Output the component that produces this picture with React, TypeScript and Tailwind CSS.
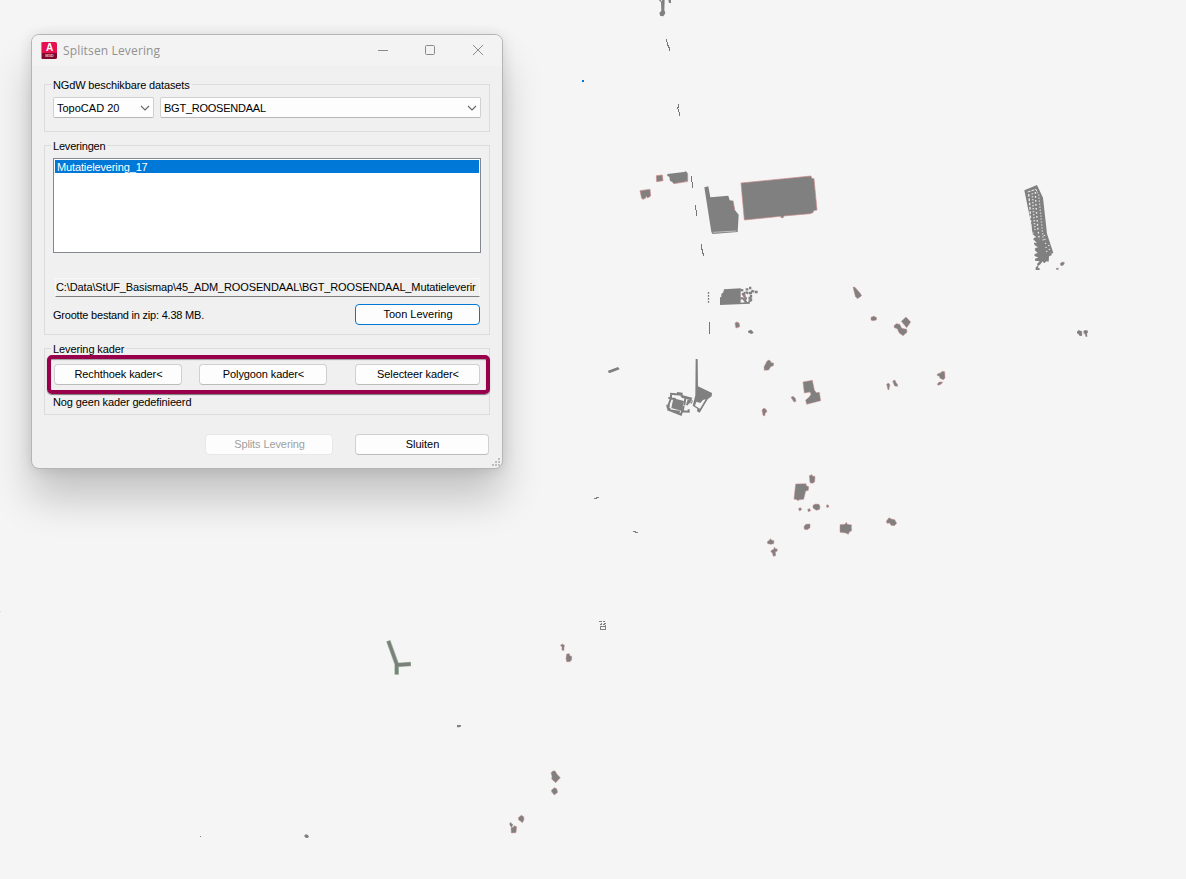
import type { ReactNode } from "react";
import { cva } from "class-variance-authority";
import { clsx } from "clsx";

const DELIVERIES = [{ id: 17, name: "Mutatielevering_17" }];

const button = cva(
  "flex h-[21px] shrink-0 items-center justify-center whitespace-nowrap rounded-[4px] border bg-[#fdfdfd] pb-px pl-px",
  {
    variants: {
      tone: {
        normal: "border-[#d0d0d0] border-b-[#bcbcbc] text-black",
        primary: "border-[#0078d4] text-black",
        disabled: "border-[#e7e7e7] bg-[#f7f7f7] text-[#a0a0a0]",
      },
    },
    defaultVariants: { tone: "normal" },
  }
);

interface GroupProps {
  title: string;
  className?: string;
  titleClassName?: string;
  children: ReactNode;
}

function Group({ title, className, titleClassName, children }: GroupProps) {
  return (
    <section className={clsx("flex w-[446px] shrink-0 flex-col border border-[#dcdcdc] px-2", className)}>
      <h2 className="-mt-[7px] -ml-0.5 flex h-[14px] w-fit shrink-0 items-center bg-[#f0f0f0] px-0.5 leading-[14px]">
        <span className={titleClassName}>{title}</span>
      </h2>
      {children}
    </section>
  );
}

function Select({ value, className, textClassName }: { value: string; className: string; textClassName?: string }) {
  return (
    <button
      className={clsx(
        "flex h-[21px] items-center justify-between rounded-[2px] border border-[#d0d0d0] border-b-[#b8b8b8] bg-[#fdfdfd] pl-[3px] pr-[3px]",
        className
      )}
    >
      <span className={textClassName}>{value}</span>
      <svg width="10" height="6" viewBox="0 0 10 6" fill="none" stroke="#666" strokeWidth="1.1">
        <path d="M1 1 5 5 9 1" />
      </svg>
    </button>
  );
}

function AppLogo() {
  return (
    <span className="relative -mt-px flex h-[17px] w-4 flex-col items-center overflow-hidden rounded-[2px] bg-[#e51050] font-[Liberation_Sans] font-bold text-white">
      <span className="absolute inset-y-0 left-0 w-px bg-[#ef6a92]" />
      <span className="z-10 flex h-[11px] items-center pl-px pt-px text-[10px] leading-[11px]">A</span>
      <span className="ml-px flex h-1.5 w-full items-center justify-center bg-[#80082f] text-[4px] leading-none text-[#e8c6d2]">
        M3D
      </span>
    </span>
  );
}

function TitleBar() {
  return (
    <header className="flex h-[31px] shrink-0 items-center bg-[#f3f3f3] pl-[9px] text-[#919191]">
      <AppLogo />
      <h1 className="ml-1.5 flex-1 font-['Open_Sans',sans-serif] text-[12px] leading-4 tracking-[0.15px]">
        Splitsen Levering
      </h1>
      <svg width="110" height="12" viewBox="0 0 110 12" fill="none" stroke="#8a8a8a" className="-mt-0.5 mr-[15px]">
        <path d="M1 6.5h10" />
        <rect x="48.5" y="1.5" width="9" height="9" rx="1" />
        <path d="m96 1 10 10M106 1 96 11" />
      </svg>
    </header>
  );
}

function Grip() {
  return (
    <svg width="8" height="8" viewBox="0 0 8 8" fill="#bdbdbd" className="absolute bottom-[2px] right-[2px]">
      <path d="M6 0h2v2H6zM3 3h2v2H3zM6 3h2v2H6zM0 6h2v2H0zM3 6h2v2H3zM6 6h2v2H6z" />
    </svg>
  );
}

function SplitDialog() {
  return (
    <div className="absolute left-[31px] top-[34px] flex h-[435px] w-[472px] flex-col rounded-[8px] border border-[#b5b5b5] bg-[#f0f0f0] shadow-[0_30px_40px_rgba(0,0,0,0.2),0_1px_14px_rgba(0,0,0,0.12)]">
      <div className="overflow-hidden rounded-t-[7px]">
        <TitleBar />
      </div>

      <div className="flex flex-1 flex-col pl-3 pt-[18px]">
        <Group title="NGdW beschikbare datasets" className="h-12" titleClassName="tracking-[-0.14px]">
          <div className="mt-[5px] flex gap-1.5">
            <Select value="TopoCAD 20" className="w-[101px]" />
            <Select value="BGT_ROOSENDAAL" className="w-[321px]" textClassName="tracking-[-0.24px]" />
          </div>
        </Group>

        <Group title="Leveringen" className="mt-[13px] h-[190px]" titleClassName="tracking-[-0.2px]">
          <ul className="mt-[5px] h-[95px] w-[428px] border border-[#828790] bg-white p-px">
            {DELIVERIES.map((item) => (
              <li key={item.id} className="h-[13px] bg-[#0078d7] pl-0.5 leading-[14px] tracking-[-0.13px] text-white">
                {item.name}
              </li>
            ))}
          </ul>
          <div className="ml-0.5 mt-[25px] flex h-[19px] w-[425px] items-center border border-[#f8f8f8] border-b-[#7d7d7d] pb-0.5">
            <span className="whitespace-nowrap tracking-[-0.13px]">
              C:\Data\StUF_Basismap\45_ADM_ROOSENDAAL\BGT_ROOSENDAAL_Mutatieleverir
            </span>
          </div>
          <div className="mt-[7px] flex w-[427px] items-center justify-between">
            <span className="tracking-[-0.21px]">Grootte bestand in zip: 4.38 MB.</span>
            <button className={clsx(button({ tone: "primary" }), "w-[125px]")}>Toon Levering</button>
          </div>
        </Group>

        <Group title="Levering kader" className="relative mt-[13px] h-[67px]" titleClassName="tracking-[-0.1px]">
          <div className="ml-px mt-2 flex tracking-[-0.1px]">
            <button className={clsx(button(), "w-32")}>Rechthoek kader&lt;</button>
            <button className={clsx(button(), "ml-[17px] w-32")}>Polygoon kader&lt;</button>
            <button className={clsx(button(), "ml-7 w-[125px]")}>Selecteer kader&lt;</button>
          </div>
          <p className="mt-[10px] leading-[14px] tracking-[-0.13px]">Nog geen kader gedefinieerd</p>
          {/* Highlight around the frame actions */}
          <div className="pointer-events-none absolute left-[2px] top-[6px] h-[39px] w-[443px] rounded-[5px] border-4 border-[#98004c] shadow-[0_1px_1px_rgba(0,0,0,0.5),inset_0_1px_1px_rgba(0,0,0,0.35)]" />
        </Group>

        <footer className="mt-[19px] flex pl-[161px]">
          <button disabled className={clsx(button({ tone: "disabled" }), "w-32 tracking-[-0.1px]")}>
            Splits Levering
          </button>
          <button className={clsx(button(), "ml-[22px] w-[134px]")}>Sluiten</button>
        </footer>
      </div>
      <Grip />
    </div>
  );
}

function MapCanvas() {
  return (
    <svg
      width="1186"
      height="879"
      viewBox="0 0 1186 879"
      className="block"
      fill="#808080"
      stroke="none"
    >
      {/* North-west blocks */}
      <g transform="translate(630 160) scale(.33333)">
        <g stroke="#cf8a8a" strokeWidth="2">
          <path d="M333 69 543 48 545 55 552 56 561 150 550 152 550 157 541 161 461 168 460 173 453 173 452 169 343 180Z" />
          <path d="M30 92 60 88 62 108 53 114 49 109 46 115 39 118 35 115Z" />
          <path d="M79 47 97 45 99 62 80 65Z" />
          <path d="M315 490 320 486 327 489 329 500 318 504Z" />
        </g>
        <path d="M112 42 162 36 168 34 173 40 173 64 131 71 126 65 120 63 118 50 112 48Z" />
        <path d="m131 71 42-6V42" fill="none" stroke="#cf8a8a" strokeWidth="2" />
        <path d="M223 82 235 79 241 112 295 107 299 121 309 122 314 149 326 164 323 216 248 222 244 216Z" />
        <path d="m309 122 5 27" stroke="#cf7777" strokeWidth="2" />
        <path d="m249 217 70-4" stroke="#ddd" strokeWidth="2" />
        <path
          d="M184.500 48v18h3v9h0v8M196.500 135v14h3v6v12h3M214.500 252v16h3v12h3v7M238.500 486v36"
          fill="none"
          stroke="#777"
          strokeWidth="3"
          shapeRendering="crispEdges"
        />
        <path d="M235.500 396v36" fill="none" stroke="#777" strokeWidth="4" strokeDasharray="5 4" />
        <path d="M270 435V412l4-1v-9l6-5 2-9 50-3v43l27-3 1 6Z" />
        <path d="m331 390 9 1m7-3h8m2-4h7m0 8 10 4h9M336 404l7-4v22m-12-7h22m-5-19 7 5m4 9v16m-15-6 5 8m8-29h6v27" fill="none" stroke="#808080" strokeWidth="7" strokeDasharray="9 2" />
        <path d="m344 406 4 5m-6 2 4 3" stroke="#ef7777" strokeWidth="3" />
        <path d="m354 513 9-4 4 4 4 5-6 4-10-4Z" />
      </g>

      {/* Road fragments at the top */}
      <g transform="translate(640 0) scale(.33333)">
        <path d="M57 0h5l2 5 2-5h8l-1 30 3 10-6 9-9-1-3-9 6-7-1-26-4-2ZM85 0h8v9h-6Z" />
        <path
          d="M79.500 118v8h3v10h3v6h3v10M115.500 312v11h-3v3h3v10h3v12"
          fill="none"
          stroke="#777"
          strokeWidth="3"
          shapeRendering="crispEdges"
        />
      </g>
      <path d="M582 80h2v2h-2z" fill="#0078d7" />

      {/* Parking strip */}
      <g transform="translate(1000 175) scale(.33333)">
        <path d="m73 46 38-16 18 38 12 108 19 58-6 2 1 5-8 3-1 16-6-1-8 6-4-6-8 10-4 2-2 8 5 1v5h-12v-8l6-5-2-5 8-8-14-2v-6l10-3-12-6 1-5 9-3-9-9 2-6 8-2-12-8v-6h9l-11-9 2-6 7-1-11-9-4-29Z" />
        <g fill="none" stroke="#ededed">
          <path d="m83 51 25-8 5 12" strokeWidth="3" strokeDasharray="9 3" />
          <path d="m86 57 4 40 3 70" strokeWidth="4" strokeDasharray="8 5" />
          <path d="m97 55 3 50 5 60" strokeWidth="5" strokeDasharray="3 6" />
          <path d="m106 51 2 40 5 64 5 40" strokeWidth="4" strokeDasharray="5 7" />
          <path d="m116 59 6 59 8 80" strokeWidth="4" strokeDasharray="3 6" />
          <path d="m99 173 4 26 1 41M133 180l8 55M146 210l4 24" strokeWidth="4" strokeDasharray="3 9" />
        </g>
        <path d="m180 266 7-6 7 4-4 7-7 2ZM168 280l7-2 1 5-6 2Z" />
        <path d="m190 260 4 4m-24 16 5 4M245 469v12M252 469v10" stroke="#df8888" strokeWidth="2" />
        <path d="m231 470 6-6 2 3 6 1 1 14-7 1-3-5-5-3ZM251 468l4-3 9 2-1 7-2 1 1 10h-5l-2-9-4-3Z" />
      </g>

      {/* Central buildings */}
      <g transform="translate(600 340) scale(.33333)">
        <path d="m24 92 12-4 18-7 5 7-27 10-6 1ZM287 57h6l1 82 42 20-1 10-12 9-24 40-8-4 1-8-14-9 8-31Z" />
        <path d="m289 185 12 4 8-9 8-2-17 28-15-9Z" fill="#f5f5f5" />
        <path d="m220 175 32 8-6 30-32-9Z" />
        <g fill="none" stroke="#808080" strokeWidth="6">
          <path d="m210 161 36 3m-33-2v12m-8-1 22 4m4-18 14 2v7l31 8M245 170l26 7-2 10-8 3M213 174l-10 29 8 6" />
          <path d="m199 196 10 4m-7 8 41 16 4-14M208 211l32 4M256 175l-3 21m13-17-5 17m-10 2-3 16 18 1v-7" />
        </g>
        <path d="m272 179 5 3-3 9" fill="none" stroke="#808080" strokeWidth="3" />
        <g stroke="#cf8a8a" strokeWidth="1.5">
          <path d="m500 65 5-5 7 3 1 5 8 1-1 8-8 3-6 10-13 1-1-10Z" />
          <path d="m609 126 28-5 6 29 6 8 9-1 4 25-42 11-3-13 10-8 6-9-3-7-17 3Z" />
          <path d="m573 172 6-3 7 6 2 9-6 2ZM486 210l6-6 7 5 2 7-5 2-2 10-5-2Z" />
        </g>
      </g>

      {/* Eastern buildings */}
      <g transform="translate(840 280) scale(.33333)" stroke="#cf8a8a" strokeWidth="1.5">
        <path d="m39 21 6 1 15 17 5 8-8 6-5 3-6-7Z" />
        <path d="m93 112 5-2 4-2 4 3 4 2-1 7-11 2-5-2Z" />
        <path d="m184 124 14-13 14 15-12 17ZM162 137l7-6 10 2 6 12 15 3 1 9-12 10-12-9-5-12-9-3Z" />
        <path d="m140 313 5-4 5 6-2 5-1 9h-3ZM158 303l7-3 3 8 4 4 1 7-9-1-3-7Z" />
        <path d="m292 282 11-4 3-4 8 1 1 19-5 5-10-4-2-7-6-1ZM292 312l6-6h10l-5 7-9 3Z" />
      </g>

      {/* Southern buildings */}
      <g transform="translate(760 465) scale(.33333)" stroke="#cf8a8a" strokeWidth="1.5">
        <path d="m107 57 31-1 1 6 7 3-1 11-8 2-6 25-14 1-2 3-5-3-8-2ZM148 32l8-3 2 5h7l-1 17-7 4-7-2Z" />
        <path d="m159 121 8-4 10 1 3 7-1 8-10 3-10-7ZM116 130l6-2 3 6-7 4ZM143 133l6-2 3 6-7 3ZM199 121l5-2 3 6-6 3Z" />
        <path d="m132 185 5-7 13-1v11l-8 6-9-1Z" />
        <path d="m240 179 15-1 4-6 3 6 13 2-1 6 1 11-7 4-3 7-8-4-17-2ZM379 169l8-11 7 4 10 2 6 11-7 7-10-1-4-7-8 1Z" />
        <path d="m22 230 6-4 4-5 3 5 7 1-1 9-8 2-10-2ZM33 257l9-5 1-6 3 5 6 1-1 7-5 1 1 12-7 2-3-11-4-2Z" />
      </g>
      <path d="M594 498h3v1h-3zM596 497h3v1h-3zM633 531h3v1h2v1h-3v-1h-2z" />

      {/* South-west */}
      <g transform="translate(370 630) scale(.33333)">
        <path d="m55 32 25 70v32M80 105l43-3" fill="none" stroke="#a9c5ae" strokeWidth="14" />
        <path d="m55 33 25 69v31M80 105l42-3" fill="none" stroke="#7c807c" strokeWidth="10" />
        <path d="M261 285h12v5h-4v2h-8Z" />
        <g stroke="#cf8a8a" strokeWidth="1.5">
          <path d="m543 428 7-6 6 2 5 9 10 10-14 15-12-11 1-8ZM544 481l9-8 7 3 3 11-10 8-7-8Z" />
          <path d="m445 563 9-7 7 4 1 9-5 9-6-5-5-3ZM423 593l8-2 1-4 8 3-2 18-14 1Z" />
          <path d="m590 72 8-1 2 7 5 1v10l-5 6h-10l-2-10ZM571 46l7-4 6 5-2 4v10h-6V50Z" />
        </g>
        <path d="m418 581 5-5 2 5 4 1-3 10-5-3Z" />
      </g>
      <g stroke="#808080" strokeWidth="1" shapeRendering="crispEdges">
        <path d="M599 621.5h3m1 0h2M601 623.5h1m2 0h2M600 624.500h2m1 0h2M600 626.5h6M600 629.5h6M600.5 626v4M605.5 625v5" />
      </g>
      <path d="m304 836 2-2 3 2-1 2h-2ZM200 836h1v1h-1z" />
      <path d="M0 611h1v1H0z" fill="#d8d8d8" />
    </svg>
  );
}

export default function App() {
  return (
    <main className="relative h-[879px] w-[1186px] overflow-hidden bg-[#f5f5f5] font-['Liberation_Sans',sans-serif] text-[11px] leading-[14px] text-black">
      <MapCanvas />
      <SplitDialog />
    </main>
  );
}
